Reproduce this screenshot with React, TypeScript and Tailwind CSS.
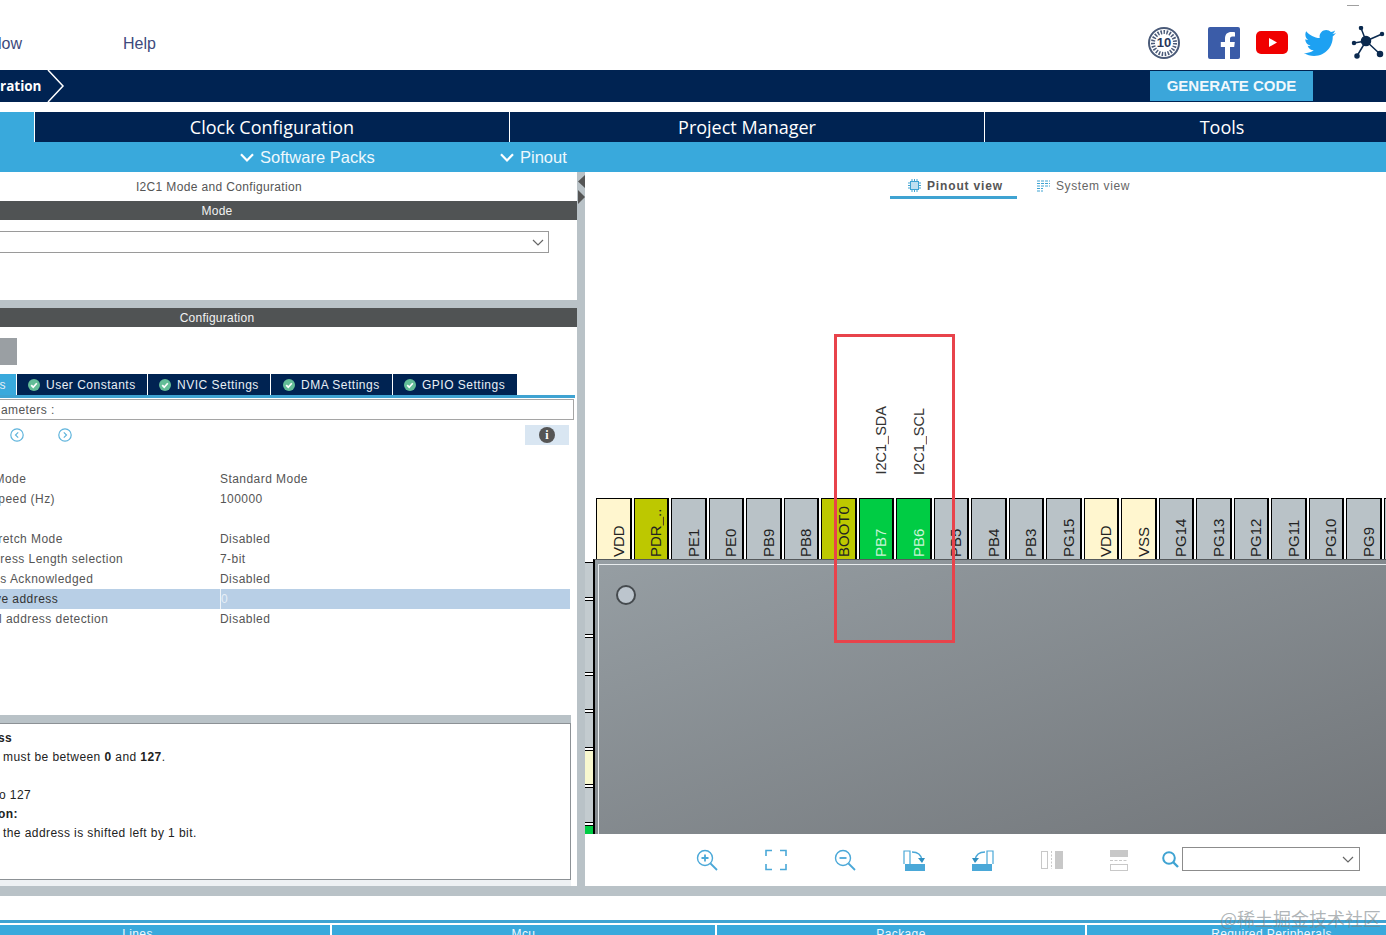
import React from "react";
import { FaTwitter } from "react-icons/fa";

const Tick = () => (
  <svg width="12" height="12" viewBox="0 0 12 12" className="shrink-0">
    <circle cx="6" cy="6" r="6" fill="#63bd97" />
    <path d="M3.2 6.2 5.2 8.2 8.8 4.2" fill="none" stroke="#fff" strokeWidth="1.7" />
  </svg>
);

const pins: { n: string; c: string; t?: string; l?: string }[] = [
  { n: "VDD", c: "bg-[#fff6cf]" },
  { n: "PDR_..", c: "bg-[#bdc800]" },
  { n: "PE1", c: "bg-[#b9c2c7]" },
  { n: "PE0", c: "bg-[#b9c2c7]" },
  { n: "PB9", c: "bg-[#b9c2c7]" },
  { n: "PB8", c: "bg-[#b9c2c7]" },
  { n: "BOOT0", c: "bg-[#bdc800]" },
  { n: "PB7", c: "bg-[#00cc44]", t: "text-[#c9f5d6]", l: "I2C1_SDA" },
  { n: "PB6", c: "bg-[#00cc44]", t: "text-[#c9f5d6]", l: "I2C1_SCL" },
  { n: "PB5", c: "bg-[#b9c2c7]" },
  { n: "PB4", c: "bg-[#b9c2c7]" },
  { n: "PB3", c: "bg-[#b9c2c7]" },
  { n: "PG15", c: "bg-[#b9c2c7]" },
  { n: "VDD", c: "bg-[#fff6cf]" },
  { n: "VSS", c: "bg-[#fff6cf]" },
  { n: "PG14", c: "bg-[#b9c2c7]" },
  { n: "PG13", c: "bg-[#b9c2c7]" },
  { n: "PG12", c: "bg-[#b9c2c7]" },
  { n: "PG11", c: "bg-[#b9c2c7]" },
  { n: "PG10", c: "bg-[#b9c2c7]" },
  { n: "PG9", c: "bg-[#b9c2c7]" },
  { n: "", c: "bg-[#b9c2c7]" },
];

const sidePins = [
  "bg-[#c3cbcf]", "bg-[#c3cbcf]", "bg-[#c3cbcf]", "bg-[#c3cbcf]", "bg-[#c3cbcf]",
  "bg-[#f8f8cf]", "bg-[#c3cbcf]", "bg-[#00cc44]",
];

const rows: { a: string; b: string; hl?: boolean }[] = [
  { a: "I2C Speed Mode", b: "Standard Mode" },
  { a: "I2C Clock Speed (Hz)", b: "100000" },
  { a: "", b: "" },
  { a: "Clock No Stretch Mode", b: "Disabled" },
  { a: "Primary Address Length selection", b: "7-bit" },
  { a: "Dual Address Acknowledged", b: "Disabled" },
  { a: "Primary slave address", b: "0", hl: true },
  { a: "General Call address detection", b: "Disabled" },
];

const Chevron = () => (
  <svg width="14" height="9" viewBox="0 0 14 9" fill="none" stroke="#fff" strokeWidth="2.2">
    <path d="M1 1.2 7 7.4 13 1.2" />
  </svg>
);

const SmallChevron = () => (
  <svg width="12" height="7" viewBox="0 0 12 7" fill="none" stroke="#666" strokeWidth="1.2">
    <path d="M1 1 6 6 11 1" />
  </svg>
);

const Toolbar = () => (
  <div className="h-[52px] relative flex items-center bg-white shrink-0">
    <div className="flex items-center pl-[111px]">
      <svg width="22" height="22" viewBox="0 0 22 22" fill="none" stroke="#4aa8d8" strokeWidth="1.4" className="mr-[47px]">
        <circle cx="9" cy="9" r="7.5" />
        <path d="M9 5.5v7M5.5 9h7" strokeWidth="1.8" />
        <path d="M14.5 14.5 21 21" strokeWidth="1.8" />
      </svg>
      <svg width="22" height="22" viewBox="0 0 22 22" fill="none" stroke="#4aa8d8" strokeWidth="1.6" className="mr-[47px]">
        <path d="M1 7V1.5h6M15 1.5h6V7M1 15v5.500h6M15 20.500h6V15" />
      </svg>
      <svg width="22" height="22" viewBox="0 0 22 22" fill="none" stroke="#4aa8d8" strokeWidth="1.4" className="mr-[47px]">
        <circle cx="9" cy="9" r="7.500" />
        <path d="M5.500 9h7" strokeWidth="1.800" />
        <path d="M14.500 14.500 21 21" strokeWidth="1.800" />
      </svg>
      <svg width="22" height="21" viewBox="0 0 22 21" className="mr-[47px]">
        <path d="M1 14V1h6v13" fill="none" stroke="#4aa8d8" strokeWidth="1.2" />
        <rect x="2" y="14" width="20" height="7" fill="#4aa8d8" />
        <path d="M9 2c5 0 9 2 10 8" fill="none" stroke="#4aa8d8" strokeWidth="1.500" />
        <path d="M15 8h7l-3 5z" fill="#2f8fc0" />
      </svg>
      <svg width="22" height="21" viewBox="0 0 22 21" className="mr-[47px]">
        <path d="M21 14V1h-6v13" fill="none" stroke="#4aa8d8" strokeWidth="1.200" />
        <rect x="0" y="14" width="20" height="7" fill="#4aa8d8" />
        <path d="M13 2C8 2 4 4 3 10" fill="none" stroke="#4aa8d8" strokeWidth="1.500" />
        <path d="M0 8h7l-4 5z" fill="#2f8fc0" />
      </svg>
      <svg width="22" height="18" viewBox="0 0 22 18" className="mr-[47px]">
        <rect x="0.500" y="0.500" width="6" height="17" fill="none" stroke="#c8c8c8" />
        <path d="M10.500 0v18" stroke="#c8c8c8" strokeDasharray="2 1.500" />
        <rect x="14" y="0" width="8" height="18" fill="#c8c8c8" />
      </svg>
      <svg width="18" height="21" viewBox="0 0 18 21" className="mr-[34px]">
        <rect x="0" y="0" width="18" height="7" fill="#c8c8c8" />
        <path d="M0 10.500h18" stroke="#c8c8c8" strokeDasharray="3 1.500" />
        <rect x="0.500" y="14.500" width="17" height="6" fill="none" stroke="#c8c8c8" />
      </svg>
      <svg width="17" height="17" viewBox="0 0 17 17" fill="none" stroke="#3fa3d2" strokeWidth="2" className="mr-[3px] -translate-y-px">
        <circle cx="7" cy="7" r="5.800" />
        <path d="M11 11l5 5" strokeWidth="2.400" />
      </svg>
      <div className="w-[178px] h-[24px] border border-[#8c8c8c] flex items-center justify-end pr-[5px] -translate-y-px">
        <SmallChevron />
      </div>
    </div>
  </div>
);

export default function App() {
  return (
    <div className="relative w-[1386px] h-[935px] overflow-hidden bg-white font-['Liberation_Sans',sans-serif]">
      {/* menu */}
      <div className="relative h-[70px] flex items-start pt-[34px] text-[16px] leading-[20px] text-[#3d4a7c]">
        <span className="w-[125px] -ml-[2px]">low</span>
        <span>Help</span>
        <div className="absolute left-[1347px] top-[5px] w-[12px] h-[1px] bg-[#a0a0a0]" />
        <div className="ml-auto flex items-center -mt-[8px] h-[34px]">
          <svg width="32" height="32" viewBox="0 0 32 32" className="mr-[28px]">
            <circle cx="16" cy="16" r="15" fill="#fff" stroke="#4a5a78" strokeWidth="2" />
            <circle cx="16" cy="16" r="11" fill="none" stroke="#4a5a78" strokeWidth="4" strokeDasharray="1.500 1.500" />
            <text x="16" y="20" textAnchor="middle" fontSize="13" fontWeight="700" fontFamily="Liberation Sans" fill="#27365a">10</text>
          </svg>
          <svg width="32" height="32" viewBox="0 0 32 32" className="mr-[16px]">
            <rect width="32" height="32" rx="2" fill="#3b5ca8" />
            <path d="M22 32V20h4.200l.6-5H22v-3c0-1.500.6-2.400 2.500-2.400H27V5.200C26.500 5.100 25 5 23.300 5 19.600 5 17 7.200 17 11.400V15h-4.200v5H17v12z" fill="#fff" />
          </svg>
          <svg width="32" height="24" viewBox="0 0 32 24" className="mr-[16px]">
            <rect width="32" height="23" rx="5" fill="#f00000" />
            <path d="M13 7l8 4.500-8 4.500z" fill="#fff" />
          </svg>
          <FaTwitter size={32} color="#1da1f2" className="mr-[15px]" />
          <svg width="34" height="34" viewBox="0 0 34 34" className="mr-[1px]" stroke="#0b2a4f" strokeWidth="1.500" fill="#0b2a4f">
            <path d="M15 15 10 2M15 15 31 8M15 15 3 17M15 15 6 30M15 15 29 28" />
            <circle cx="15" cy="15" r="4.500" />
            <circle cx="10" cy="2" r="1.500" />
            <circle cx="31" cy="8" r="1.500" />
            <circle cx="3" cy="17" r="1.500" />
            <circle cx="6" cy="30" r="2" />
            <circle cx="29" cy="28" r="2.500" />
          </svg>
        </div>
      </div>

      {/* breadcrumb */}
      <div className="relative h-[32px] bg-[#002352] flex items-center font-['Open_Sans',sans-serif] text-[13.5px] font-bold text-white">
        <span>ration</span>
        <svg width="18" height="32" viewBox="0 0 18 32" fill="none" stroke="#fff" strokeWidth="1.500" className="ml-[5px]">
          <path d="M1 0 16 16 1 32" />
        </svg>
        <div className="ml-auto mr-[73px] w-[163px] h-[30px] bg-[#3ba6da] flex items-center justify-center text-[15px] font-bold font-['Liberation_Sans',sans-serif] text-[#f1f8fc]">
          GENERATE CODE
        </div>
      </div>

      <div className="h-[10px]" />

      {/* main tabs */}
      <div className="h-[30px] flex gap-[1px] font-['Open_Sans',sans-serif] text-[18px] font-medium text-white">
        <div className="w-[34px] shrink-0 bg-[#39a9dc]" />
        <div className="w-[474px] shrink-0 bg-[#002352] flex items-center justify-center">Clock Configuration</div>
        <div className="w-[474px] shrink-0 bg-[#002352] flex items-center justify-center">Project Manager</div>
        <div className="w-[474px] shrink-0 bg-[#002352] flex items-center justify-center">Tools</div>
      </div>

      {/* sub bar */}
      <div className="h-[30px] bg-[#39a9dc] flex items-center pt-[1px] text-[16.5px] text-[#eef8fd]">
        <div className="ml-[240px] w-[260px] flex items-center gap-[6px]">
          <Chevron />
          <span>Software Packs</span>
        </div>
        <div className="flex items-center gap-[6px]">
          <Chevron />
          <span>Pinout</span>
        </div>
      </div>

      {/* workspace */}
      <div className="h-[714px] flex">
        <div className="w-[577px] overflow-hidden shrink-0">
          <div className="w-[720px] -ml-[143px] text-[12px] text-[#555]">
            <div className="h-[29px] flex items-center justify-center pl-[4px] tracking-[0.35px]">I2C1 Mode and Configuration</div>
            <div className="h-[19px] bg-[#505354] text-[#f2f2f2] tracking-[0.25px] flex items-center justify-center">Mode</div>
            <div className="mt-[11px] h-[22px] mr-[28px] border border-[#9a9a9a] flex items-center justify-end pr-[4px]">
              <SmallChevron />
            </div>
            <div className="mt-[47px] h-[8px] bg-[#b9c2c7]" />
            <div className="h-[19px] bg-[#505354] text-[#f2f2f2] tracking-[0.25px] flex items-center justify-center">Configuration</div>
            <div className="mt-[11px] w-[160px] h-[27px] bg-[#9a9fa3]" />
            <div className="mt-[9px] h-[21px] flex gap-[1px] tracking-[0.5px] text-[#e8eff5]">
              <div className="w-[159px] shrink-0 bg-[#39a9dc] flex items-center justify-end pr-[10px] whitespace-nowrap">s</div>
              <div className="w-[130px] shrink-0 bg-[#002352] flex items-center gap-[6px] pl-[11px]"><Tick />User Constants</div>
              <div className="w-[122px] shrink-0 bg-[#002352] flex items-center gap-[6px] pl-[11px]"><Tick />NVIC Settings</div>
              <div className="w-[121px] shrink-0 bg-[#002352] flex items-center gap-[6px] pl-[12px]"><Tick />DMA Settings</div>
              <div className="w-[124px] shrink-0 bg-[#002352] flex items-center gap-[6px] pl-[11px]"><Tick />GPIO Settings</div>
            </div>
            <div className="h-[3px] mr-[2px] bg-[#3fa3d2]" />
            <div className="mt-[1px] h-[21px] mr-[3px] border border-[#a5a5a5] flex items-center pl-[143px] tracking-[0.4px]">ameters :</div>
            <div className="mt-[5px] h-[20px] flex items-center mr-[8px]">
              <svg width="14" height="14" viewBox="0 0 14 14" fill="none" stroke="#5fb4dc" strokeWidth="1.200" className="ml-[153px] mr-[34px]">
                <circle cx="7" cy="7" r="6.200" />
                <path d="M8.200 4.300 5.500 7l2.700 2.700" />
              </svg>
              <svg width="14" height="14" viewBox="0 0 14 14" fill="none" stroke="#5fb4dc" strokeWidth="1.200">
                <circle cx="7" cy="7" r="6.200" />
                <path d="M5.800 4.300 8.500 7l-2.700 2.700" />
              </svg>
              <div className="ml-auto w-[44px] h-[20px] bg-[#d9e6f2] flex items-center justify-center">
                <span className="w-[16px] h-[16px] rounded-full bg-[#555] text-white text-[12px] font-bold leading-[16px] text-center font-['Liberation_Serif',serif]">i</span>
              </div>
            </div>
            <div className="mt-[24px] mr-[7px] tracking-[0.45px]">
              {rows.map((r, i) => (
                <div key={i} className={`h-[20px] flex items-center ${r.hl ? "bg-[#b8cfe6] text-[#333]" : ""}`}>
                  <div className="w-[363px] pl-[73px] whitespace-nowrap">{r.a}</div>
                  {r.hl ? (
                    <div className="h-full border-l border-[#eef3f8] text-[#e6eef6] flex items-center">{r.b}</div>
                  ) : (
                    <div>{r.b}</div>
                  )}
                </div>
              ))}
            </div>
            <div className="mt-[86px] h-[8px] mr-[6px] bg-[#b9c2c7]" />
            <div className="h-[157px] mr-[6px] border border-[#8c9195] pl-[143px] pt-[5px] text-[#222] leading-[19px] tracking-[0.42px]">
              <div className="font-bold -ml-[3px]">ss</div>
              <div className="pl-[2px]">must be between <b>0</b> and <b>127</b>.</div>
              <div className="h-[19px]" />
              <div className="-ml-[2px]">o 127</div>
              <div className="font-bold -ml-[3px]">on:</div>
              <div className="pl-[2px]">the address is shifted left by 1 bit.</div>
            </div>
            <div className="h-[6px] mr-[6px] bg-[#eef1f3]" />
          </div>
        </div>

        {/* splitter */}
        <div className="w-[8px] shrink-0 bg-[#b9c2c7] pt-[2px]">
          <svg width="8" height="30" viewBox="0 0 8 30" fill="#555">
            <path d="M8 1v13L1 7.500z" />
            <path d="M1 16v14l7-7z" />
          </svg>
        </div>

        {/* pinout */}
        <div className="flex-1 min-w-0 flex flex-col overflow-hidden">
          <div className="h-[27px] shrink-0 flex items-start text-[12px] text-[#666] tracking-[0.6px]">
            <div className="ml-[305px] w-[127px] h-[27px] border-b-[3px] border-[#3fa3d2] flex items-center justify-center gap-[6px] font-bold text-[#555] tracking-[0.85px] pt-[3px] pl-[4px]">
              <svg width="13" height="13" viewBox="0 0 13 13" fill="none" stroke="#3fa3d2">
                <rect x="2.500" y="2.500" width="8" height="8" fill="#bfe0f1" />
                <path d="M4 0v2M6.500 0v2M9 0v2M4 11v2M6.500 11v2M9 11v2M0 4h2M0 6.500h2M0 9h2M11 4h2M11 6.500h2M11 9h2" />
              </svg>
              Pinout view
            </div>
            <div className="ml-[20px] h-[27px] flex items-center gap-[6px] pt-[1px]">
              <svg width="13" height="13" viewBox="0 0 13 13" stroke="#3fa3d2" strokeDasharray="3 1">
                <path d="M0 1h13M0 3.500h13M0 6h13M0 8.500h6M0 11h6" />
              </svg>
              System view
            </div>
          </div>

          <div className="flex-1 flex items-end gap-[2px] pl-[11px]">
            {pins.map((p, i) => (
              <div key={i} className="w-[35.5px] shrink-0 flex flex-col items-center">
                {p.l && (
                  <div className="[writing-mode:vertical-rl] rotate-180 mb-[23px] text-[14.5px] leading-[16px] text-[#333] whitespace-nowrap ml-[10px]">
                    {p.l}
                  </div>
                )}
                <div className={`w-full h-[61px] border border-b-0 border-r-2 border-black flex items-start justify-end pr-[3px] ${p.c}`}>
                  <span className={`[writing-mode:vertical-rl] rotate-180 text-[15px] leading-[16px] pt-[2px] h-full whitespace-nowrap ${p.t ?? "text-[#222]"}`}>
                    {p.n}
                  </span>
                </div>
              </div>
            ))}
          </div>

          <div className="h-[275px] shrink-0 flex">
            <div className="w-[8px] shrink-0 flex flex-col gap-[2px] pt-[3px] overflow-hidden">
              {sidePins.map((c, i) => (
                <div key={i} className={`h-[35.5px] shrink-0 border-y border-black ${c}`} />
              ))}
            </div>
            <div className="relative flex-1 border-l-[2px] border-t border-l-black border-t-[#55595c] bg-linear-to-br from-[#969ea3] to-[#72767a] pl-[3px] pt-[4px]">
              <div className="h-full border-l border-t border-[#e8ecee]">
                <div className="ml-[17px] mt-[20px] w-[20px] h-[20px] rounded-full bg-[#bcc5cd] border-2 border-[#454a4e]" />
              </div>
            </div>
          </div>

          <Toolbar />
        </div>
      </div>

      {/* bottom */}
      <div className="h-[10px] bg-[#b9c2c7]" />
      <div className="h-[24px]" />
      <div className="h-[3px] bg-[#3fa3d2]" />
      <div className="h-[2px]" />
      <div className="h-[10px] w-[1600px] -ml-[55px] flex gap-[2px] text-[12px] leading-[15px] tracking-[0.4px] text-[#eef8fd] bg-white overflow-hidden">
        <div className="w-[385px] shrink-0 bg-[#39a9dc] text-center pt-[2px]">Lines</div>
        <div className="w-[383px] shrink-0 bg-[#39a9dc] text-center pt-[2px]">Mcu</div>
        <div className="w-[368px] shrink-0 bg-[#39a9dc] text-center pt-[2px]">Package</div>
        <div className="w-[369px] shrink-0 bg-[#39a9dc] text-center pt-[2px]">Required Peripherals</div>
      </div>

      {/* annotation overlay */}
      <div className="absolute left-[834px] top-[334px] w-[121px] h-[309px] border-[3px] border-[#e8434b]" />
      <div className="absolute left-[1220px] top-[906px] text-[18px] leading-[24px] text-[#7a8488]/60 whitespace-nowrap font-['Noto_Sans_CJK_SC',sans-serif]">
        @稀土掘金技术社区
      </div>
    </div>
  );
}
